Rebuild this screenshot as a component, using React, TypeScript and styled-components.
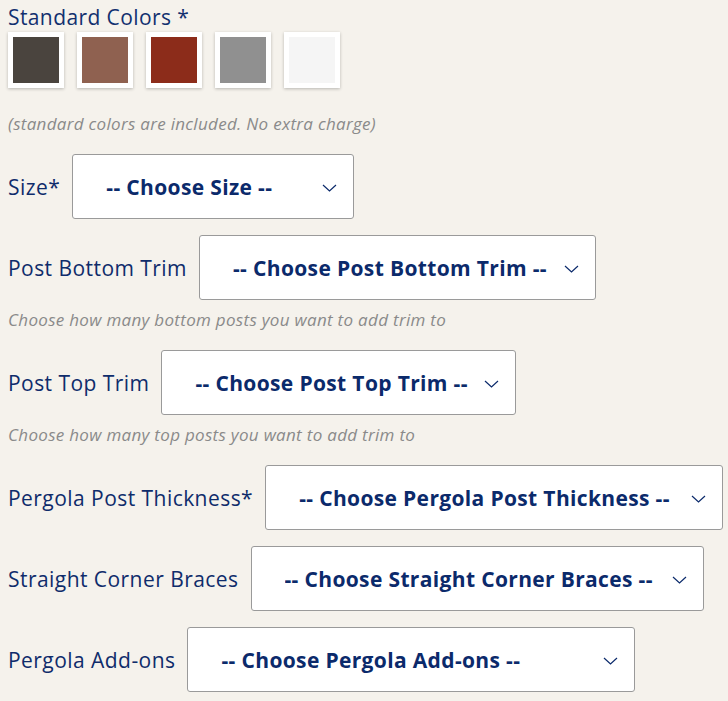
import React from 'react';
import styled, { createGlobalStyle } from 'styled-components';

const GlobalStyle = createGlobalStyle`
  html, body {
    margin: 0;
    padding: 0;
    background-color: #f5f2ec;
  }
  body {
    font-family: 'Open Sans', 'Noto Sans', sans-serif;
  }
`;

const Page = styled.div`
  padding: 3px 8px 0;
  color: #0f2c6b;
`;

const Title = styled.div`
  font-size: 21px;
  line-height: 28px;
  letter-spacing: 0.4px;
  margin-bottom: 1px;
  color: #12306f;
`;

const Swatches = styled.div`
  display: flex;
  gap: 13px;
`;

const Swatch = styled.div<{ color: string }>`
  width: 46px;
  height: 46px;
  border: 5px solid #fff;
  background-color: ${({ color }) => color};
  box-shadow: 0 1px 3px rgba(0, 0, 0, 0.25);
`;

const Note = styled.div`
  margin-top: 24px;
  margin-bottom: 18px;
  font-size: 17px;
  line-height: 24px;
  letter-spacing: 0.3px;
  font-style: italic;
  color: #8a8a8a;
`;

const Field = styled.div`
  display: flex;
  flex-direction: column;
  margin-bottom: 16px;
`;

const Row = styled.div`
  display: flex;
  align-items: center;
  gap: 12px;
`;

const Label = styled.label`
  font-size: 21px;
  line-height: 28px;
  letter-spacing: 0.45px;
  color: #0f2c6b;
  white-space: nowrap;
`;

const SelectWrap = styled.div<{ width: number }>`
  position: relative;
  width: ${({ width }) => width}px;
  flex: none;
`;

const Select = styled.select`
  appearance: none;
  -webkit-appearance: none;
  display: block;
  width: 100%;
  height: 65px;
  box-sizing: border-box;
  padding: 0 40px 0 33px;
  border: 1px solid #9a9a9a;
  border-radius: 3px;
  background-color: #fff;
  font-family: inherit;
  font-size: 21px;
  letter-spacing: 0.35px;
  font-weight: 700;
  color: #0b2a6b;
  outline: none;
`;

const Chevron = styled.svg`
  position: absolute;
  right: 17px;
  top: 50%;
  margin-top: -3px;
  width: 15px;
  height: 8px;
  pointer-events: none;
`;

const Help = styled.div`
  margin-top: 8px;
  margin-bottom: 2px;
  font-size: 17px;
  line-height: 24px;
  letter-spacing: 0.3px;
  font-style: italic;
  color: #8a8a8a;
`;

interface FieldProps {
  label: string;
  placeholder: string;
  width: number;
  help?: string;
}

const SelectField: React.FC<FieldProps> = ({ label, placeholder, width, help }) => (
  <Field>
    <Row>
      <Label>{label}</Label>
      <SelectWrap width={width}>
        <Select defaultValue="">
          <option value="">{placeholder}</option>
        </Select>
        <Chevron viewBox="0 0 15 8">
          <path d="M1 1 L7.5 7 L14 1" fill="none" stroke="#0b2a6b" strokeWidth="1.2" />
        </Chevron>
      </SelectWrap>
    </Row>
    {help && <Help>{help}</Help>}
  </Field>
);

const colors = ['#4a443e', '#8f6150', '#8c2c1a', '#909090', '#f5f5f5'];

const fields: FieldProps[] = [
  { label: 'Size*', placeholder: '-- Choose Size --', width: 282 },
  {
    label: 'Post Bottom Trim',
    placeholder: '-- Choose Post Bottom Trim --',
    width: 397,
    help: 'Choose how many bottom posts you want to add trim to',
  },
  {
    label: 'Post Top Trim',
    placeholder: '-- Choose Post Top Trim --',
    width: 355,
    help: 'Choose how many top posts you want to add trim to',
  },
  {
    label: 'Pergola Post Thickness*',
    placeholder: '-- Choose Pergola Post Thickness --',
    width: 458,
  },
  {
    label: 'Straight Corner Braces',
    placeholder: '-- Choose Straight Corner Braces --',
    width: 453,
  },
  { label: 'Pergola Add-ons', placeholder: '-- Choose Pergola Add-ons --', width: 448 },
];

const App: React.FC = () => (
  <>
    <GlobalStyle />
    <Page>
      <Title>Standard Colors *</Title>
      <Swatches>
        {colors.map((c) => (
          <Swatch key={c} color={c} />
        ))}
      </Swatches>
      <Note>(standard colors are included. No extra charge)</Note>
      {fields.map((f) => (
        <SelectField key={f.label} {...f} />
      ))}
    </Page>
  </>
);

export default App;
